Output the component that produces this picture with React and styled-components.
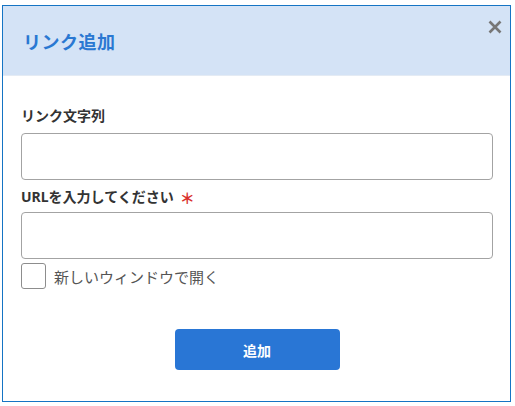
import React from 'react';
import styled, { createGlobalStyle } from 'styled-components';

const GlobalStyle = createGlobalStyle`
    body {
        margin: 0;
        background: #fff;
        font-family: "Noto Sans", "Noto Sans CJK JP", sans-serif;
    }
`;

const Dialog = styled.div`
    box-sizing: border-box;
    width: 509px;
    height: 397px;
    margin: 5px 0 0 2px;
    border: 1px solid #1574c4;
    background: #fff;
    display: flex;
    flex-direction: column;
    position: relative;
`;

const Header = styled.div`
    background: #d4e3f6;
    height: 69px;
    display: flex;
    align-items: center;
    padding-left: 20px;
    border-bottom: 1px solid #e4ebf4;
`;

const Title = styled.h1`
    margin: 0;
    font-size: 18px;
    font-weight: bold;
    color: #2a78d2;
    letter-spacing: 0.5px;
`;

const CloseButton = styled.button`
    position: absolute;
    top: 10px;
    right: 4px;
    width: 22px;
    height: 22px;
    border: none;
    background: transparent;
    padding: 0;
    cursor: pointer;
    display: flex;
    align-items: center;
    justify-content: center;
`;

const Body = styled.div`
    padding: 31px 17px 0 18px;
    display: flex;
    flex-direction: column;
`;

const Label = styled.label`
    font-size: 14px;
    font-weight: bold;
    color: #333;
    line-height: 18px;
    height: 18px;
    margin-bottom: ${p => p.gap || 9}px;
    display: flex;
    align-items: center;
`;

const Required = styled.span`
    color: #d9302e;
    font-size: 15px;
    font-weight: bold;
    margin-left: 6px;
    line-height: 18px;
    position: relative;
    top: 1px;
`;

const Input = styled.input`
    box-sizing: border-box;
    width: 100%;
    height: 47px;
    border: 1px solid #a3a3a3;
    border-radius: 4px;
    margin-bottom: ${p => p.gap || 0}px;
    font-size: 14px;
    padding: 0 10px;
    outline: none;
`;

const CheckRow = styled.label`
    display: flex;
    align-items: center;
    margin-top: 4px;
    gap: 8px;
    font-size: 15px;
    color: #555;
`;

const CheckBox = styled.span`
    box-sizing: border-box;
    width: 25px;
    height: 26px;
    border: 1px solid #8d8d8d;
    border-radius: 3px;
    background: #fff;
`;

const Footer = styled.div`
    display: flex;
    justify-content: center;
    margin-top: 40px;
`;

const SubmitButton = styled.button`
    width: 165px;
    height: 41px;
    border: none;
    border-radius: 4px;
    background: #2976d5;
    color: #fff;
    font-family: inherit;
    font-size: 14px;
    font-weight: bold;
    cursor: pointer;
`;

export default function App() {
    return (
        <>
            <GlobalStyle />
            <Dialog>
                <Header>
                    <Title>リンク追加</Title>
                </Header>
                <CloseButton aria-label="閉じる">
                    <svg width="14" height="14" viewBox="0 0 14 14">
                        <path d="M1.5 1.5 L12.5 12.5 M12.5 1.5 L1.5 12.5" stroke="#777" strokeWidth="2.6" strokeLinecap="butt" />
                    </svg>
                </CloseButton>
                <Body>
                    <Label gap={8}>リンク文字列</Label>
                    <Input gap={8} />
                    <Label gap={6}>URLを入力してください<Required>＊</Required></Label>
                    <Input />
                    <CheckRow>
                        <CheckBox />
                        新しいウィンドウで開く
                    </CheckRow>
                    <Footer>
                        <SubmitButton>追加</SubmitButton>
                    </Footer>
                </Body>
            </Dialog>
        </>
    );
}
